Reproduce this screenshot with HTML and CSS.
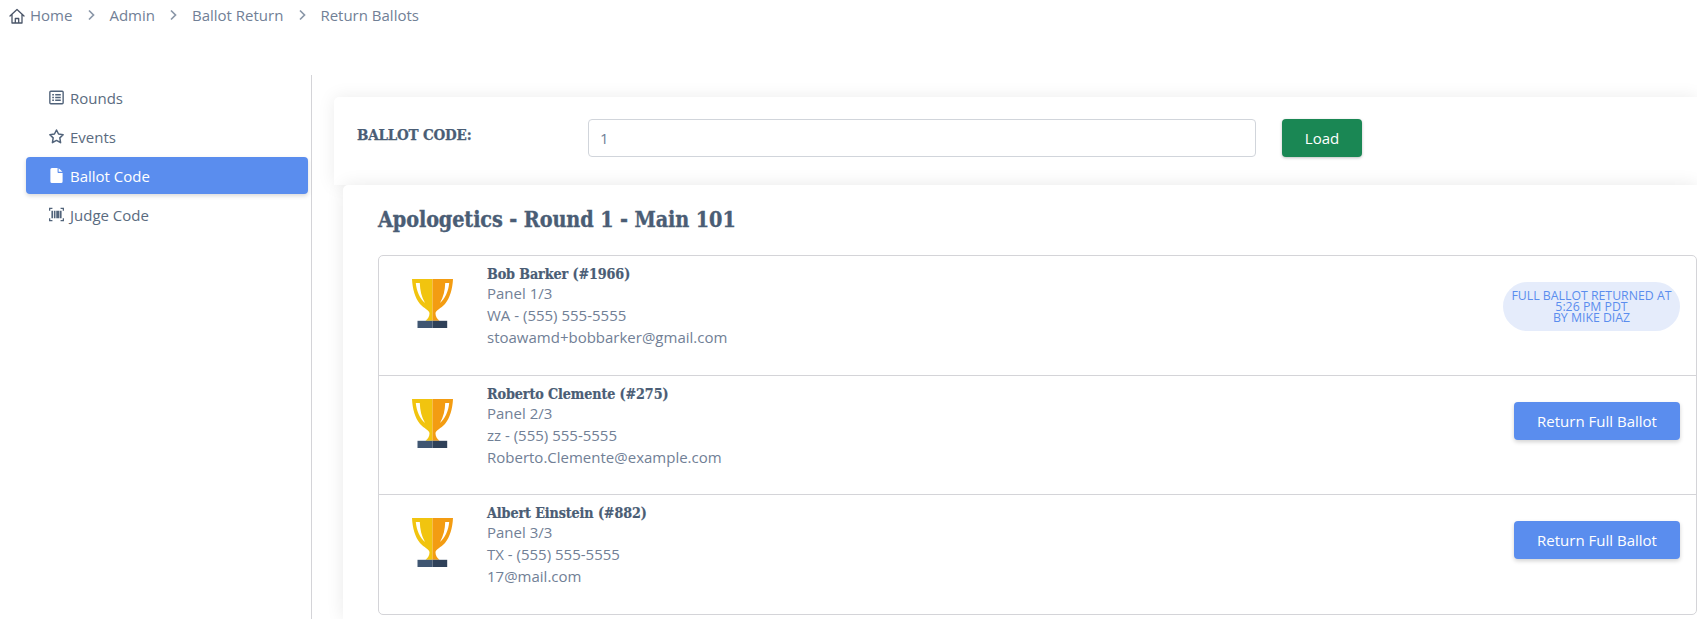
FILE: index.html
```html
<!DOCTYPE html>
<html lang="en">
<head>
<meta charset="utf-8">
<title>Return Ballots</title>
<link rel="stylesheet" href="styles.css">
</head>
<body>
<nav class="crumbs">
  <svg class="home" viewBox="0 0 16 16" fill="none" stroke="currentColor" stroke-width="1.3" stroke-linejoin="round" stroke-linecap="round"><path d="M1 8 8 1.500 15 8M3 6.500V15h10V6.500M6.300 15v-4.500h3.400V15"/></svg>
  <span>Home</span>
  <svg class="chev" viewBox="0 0 8 12" fill="none" stroke="currentColor" stroke-width="1.7"><path d="M2 1.500 6.500 6 2 10.500"/></svg>
  <span>Admin</span>
  <svg class="chev" viewBox="0 0 8 12" fill="none" stroke="currentColor" stroke-width="1.7"><path d="M2 1.500 6.500 6 2 10.500"/></svg>
  <span>Ballot Return</span>
  <svg class="chev" viewBox="0 0 8 12" fill="none" stroke="currentColor" stroke-width="1.7"><path d="M2 1.500 6.500 6 2 10.500"/></svg>
  <span>Return Ballots</span>
</nav>
<div class="layout">
  <aside class="side">
    <a class="item">
      <svg class="ico" viewBox="0 0 14 14" fill="none" stroke="currentColor" stroke-width="1.3"><rect x=".8" y="1.200" width="12.400" height="11.600" rx=".9"/><path d="M3 4.400h1.600M3 7h1.600M3 9.600h1.600M5.800 4.400H11M5.800 7H11M5.800 9.600H11"/></svg>
      <span>Rounds</span>
    </a>
    <a class="item">
      <svg class="ico" viewBox="0 0 14 14" fill="none" stroke="currentColor" stroke-width="1.4" stroke-linejoin="round"><path d="M7 .9 8.900 4.700 13.200 5.300 10.100 8.300 10.800 12.800 7 10.700 3.200 12.800 3.900 8.300 .8 5.300 5.100 4.700Z"/></svg>
      <span>Events</span>
    </a>
    <a class="item active">
      <svg class="ico" viewBox="0 0 14 14" fill="currentColor"><path d="M1.300 1.500A1.400 1.400 0 0 1 2.700.1H8v3.600c0 .5.4.9.9.9h3.800v8A1.400 1.400 0 0 1 11.300 14H2.700a1.400 1.400 0 0 1-1.400-1.400ZM9 .2l3.600 3.400H9Z"/></svg>
      <span>Ballot Code</span>
    </a>
    <a class="item">
      <svg class="ico" viewBox="0 0 14 14" fill="none" stroke="currentColor" stroke-width="1.200"><path d="M.6 3.600V1.200h2.600M10.800 1.200h2.600v2.400M.6 10.400v2.400h2.600M10.800 12.800h2.600v-2.400"/><path stroke-width="1.500" d="M3 3.600v6.800M5.300 3.600v6.800M7.500 3.600v6.800M9 3.600v6.800M11 3.600v6.800"/></svg>
      <span>Judge Code</span>
    </a>
  </aside>
  <main class="main">
    <section class="code-card">
      <label class="code-label">BALLOT CODE:</label>
      <div class="code-input">1</div>
      <button class="load">Load</button>
    </section>
    <section class="room">
      <h1 class="room-title">Apologetics - Round 1 - Main 101</h1>
      <div class="list">
        <article class="row">
          <svg class="trophy" viewBox="0 0 41 50"><use href="#cup"/></svg>
          <div class="info">
            <div class="name">Bob Barker (#1966)</div>
            <div>Panel 1/3</div>
            <div>WA - (555) 555-5555</div>
            <div>stoawamd+bobbarker@gmail.com</div>
          </div>
          <div class="badge">FULL BALLOT RETURNED AT<br>5:26 PM PDT<br>BY MIKE DIAZ</div>
        </article>
        <article class="row">
          <svg class="trophy" viewBox="0 0 41 50"><use href="#cup"/></svg>
          <div class="info">
            <div class="name">Roberto Clemente (#275)</div>
            <div>Panel 2/3</div>
            <div>zz - (555) 555-5555</div>
            <div>Roberto.Clemente@example.com</div>
          </div>
          <button class="return">Return Full Ballot</button>
        </article>
        <article class="row">
          <svg class="trophy" viewBox="0 0 41 50"><use href="#cup"/></svg>
          <div class="info">
            <div class="name">Albert Einstein (#882)</div>
            <div>Panel 3/3</div>
            <div>TX - (555) 555-5555</div>
            <div>17@mail.com</div>
          </div>
          <button class="return">Return Full Ballot</button>
        </article>
      </div>
    </section>
  </main>
</div>
<svg class="defs" width="0" height="0">
  <defs>
    <g id="cup">
      <path fill="#f1c40f" d="M0 0H20.500V41.800H13.500C16 40 17.500 37 17.500 34.500 17.500 31 12 29.500 8 25 3 19 .5 10 0 0Z"/>
      <path fill="#f39c12" d="M41 0H20.500V41.800H27.500C25 40 23.500 37 23.500 34.500 23.500 31 29 29.500 33 25 38 19 40.500 10 41 0Z"/>
      <path fill="#fff" d="M3.800 4H7.800C8 11 9.500 18 13 24 8 20 4.500 12 3.800 4ZM37.200 4H33.200C33 11 31.500 18 28 24 33 20 36.500 12 37.200 4Z"/>
      <path fill="#3f5672" d="M5.500 41.800H20.500V49H5.500Z"/>
      <path fill="#2f4159" d="M20.500 41.800H35.200V49H20.500Z"/>
    </g>
  </defs>
</svg>
</body>
</html>
```
FILE: styles.css
```css
* { box-sizing: border-box; }
html, body { margin: 0; height: 619px; overflow: hidden; background: #fff; }
body { font-family: "Open Sans", "Noto Sans", sans-serif; font-size: 15px; color: #718096; }

.crumbs { display: flex; align-items: center; height: 75px; padding: 0 0 46px 9px; color: #718096; }
.crumbs span { line-height: 28px; }
.home { width: 16px; height: 16px; margin-right: 5px; margin-top: 3px; color: #4a5568; }
.chev { width: 8px; height: 12px; margin: 0 14.500px; color: #8a97a8; }

.layout { display: flex; height: 544px; }
.side { width: 312px; flex: none; border-right: 1px solid #d4d4d8; padding: 4px 3px 0 26px; display: flex; flex-direction: column; gap: 2px; }
.item { display: flex; align-items: center; height: 37px; padding-left: 23px; border-radius: 4px; color: #5a6b80; }
.item .ico { width: 15px; height: 15px; margin-right: 6px; flex: none; color: #51637a; }
.item.active { background: #5a8dee; color: #fff; box-shadow: 0 2px 4px rgba(0,0,0,.15); }
.item.active .ico { color: #fff; }

.main { flex: 1; min-width: 0; padding: 22px 0 0 22px; }
.code-card { display: flex; align-items: flex-start; height: 88px; padding: 22px 0 0 23px; background: #fff; border-radius: 5px 0 0 0; box-shadow: 0 0 18px rgba(0,0,0,.08); }
.code-label { width: 231px; flex: none; font-family: "DejaVu Serif", serif; font-stretch: condensed; font-weight: 700; font-size: 15px; line-height: 32px; color: #4a5d75; letter-spacing: -.2px; -webkit-text-stroke: .25px #4a5d75; }
.code-input { width: 668px; height: 38px; border: 1px solid #d1d5db; border-radius: 4px; padding-left: 11px; line-height: 36px; color: #718096; }
.load { width: 80px; height: 38px; margin-left: 26px; border: 0; border-radius: 4px; background: #1a8754; color: #fff; font: 15px "Open Sans", sans-serif; box-shadow: 0 1px 3px rgba(0,0,0,.25); }

.room { margin-left: 9px; padding: 20px 0 0 35px; height: 434px; background: #fff; border-radius: 5px 0 0 0; box-shadow: 0 0 18px rgba(0,0,0,.09); position: relative; }
.room-title { margin: 0 0 21px; font-family: "DejaVu Serif", serif; font-stretch: condensed; font-weight: 700; font-size: 21.400px; line-height: 29px; color: #4a5d75; letter-spacing: -.1px; -webkit-text-stroke: .35px #4a5d75; }
.list { border: 1px solid #d4d4d8; border-radius: 5px; padding-bottom: 1px; }
.row { display: flex; align-items: flex-start; height: 119px; padding: 10px 16px 0 33px; border-top: 1px solid #d4d4d8; }
.row:first-child { border-top: 0; }
.trophy { width: 41px; height: 50px; margin-top: 13px; flex: none; }
.info { margin-left: 34px; flex: 1; line-height: 22px; color: #718096; }
.name { font-family: "DejaVu Serif", serif; font-stretch: condensed; font-weight: 700; font-size: 14.200px; line-height: 16px; color: #4a5d75; letter-spacing: -.1px; -webkit-text-stroke: .2px #4a5d75; }
.badge { width: 177px; height: 49px; margin-top: 16px; border-radius: 25px; background: #e5ecfb; color: #5a8dee; font-size: 12.300px; line-height: 11px; text-align: center; padding-top: 8px; }
.return { width: 166px; height: 38px; margin-top: 16px; border: 0; border-radius: 4px; background: #5a8dee; color: #fff; font: 15px "Open Sans", sans-serif; box-shadow: 0 2px 4px rgba(0,0,0,.18); }
.defs { position: absolute; }
```
